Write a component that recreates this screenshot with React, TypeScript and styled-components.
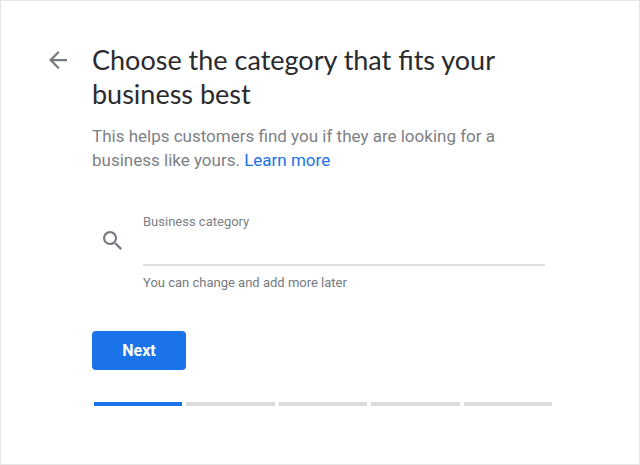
import React from "react";
import styled, { createGlobalStyle } from "styled-components";

const GlobalStyle = createGlobalStyle`
  *, *::before, *::after { box-sizing: border-box; }
  body { margin: 0; background: #fff; font-family: Roboto, "Liberation Sans", sans-serif; }
`;

const Page = styled.main`
  display: grid;
  grid-template-columns: 18px minmax(0, 1fr);
  column-gap: 25px;
  min-height: 100vh;
  padding: 42px 87px 40px 48px;
  border: 1px solid #e6e6e6;
  align-content: start;
`;

const BackButton = styled.button`
  display: flex;
  align-self: start;
  margin-top: 8px;
  padding: 0;
  border: 0;
  background: none;
  color: #757a7f;
  cursor: pointer;
`;

const Content = styled.div`
  min-width: 0;
`;

const Title = styled.h1`
  margin: 0;
  max-width: 440px;
  color: #2a2b2e;
  font-family: Lato, Roboto, sans-serif;
  font-size: 27px;
  font-weight: 400;
  line-height: 34px;
`;

const Intro = styled.p`
  margin: 13px 0 0;
  max-width: 440px;
  color: #7d8185;
  font-size: 17px;
  line-height: 24px;
`;

const TextLink = styled.a`
  color: #1a73e8;
  text-decoration: none;
`;

const Field = styled.div`
  display: grid;
  grid-template-columns: 20px minmax(0, 1fr);
  column-gap: 20px;
  margin: 42px 7px 0 11px;
`;

const FieldIcon = styled.span`
  display: flex;
  padding-top: 17px;
  color: #757a7f;
`;

const FieldBody = styled.div`
  display: flex;
  flex-direction: column;
`;

const Label = styled.label`
  color: #7d8185;
  font-size: 13px;
  line-height: 16px;
`;

const Input = styled.input`
  width: 100%;
  height: 36px;
  padding: 0;
  border: 0;
  border-bottom: 2px solid #dadce0;
  outline: 0;
  border-radius: 0;
  background: transparent;
  color: #202124;
  font: 17px Roboto, sans-serif;
`;

const Hint = styled.span`
  margin-top: 9px;
  color: #757a7f;
  font-size: 13px;
  line-height: 16px;
`;

const NextButton = styled.button`
  display: block;
  min-width: 94px;
  height: 39px;
  margin-top: 40px;
  padding: 0 24px;
  border: 0;
  border-radius: 4px;
  background: #1a73e8;
  color: #fff;
  font: 700 16px Roboto, sans-serif;
  cursor: pointer;
`;

const Steps = styled.div`
  display: grid;
  grid-template-columns: repeat(5, 1fr);
  gap: 4px;
  margin: 32px 0 0 2px;
`;

const Step = styled.span<{ $active: boolean }>`
  height: 4px;
  background: ${(p) => (p.$active ? "#1a73e8" : "#dadbdd")};
`;

export default function App() {
  return (
    <>
      <GlobalStyle />
      <Page>
        <BackButton aria-label="Back">
          <svg width="18" height="18" viewBox="4 4 16 16" fill="currentColor" aria-hidden="true">
            <path d="M20 11H7.83l5.59-5.59L12 4l-8 8 8 8 1.41-1.41L7.83 13H20v-2z" />
          </svg>
        </BackButton>
        <Content>
          <Title>Choose the category that fits your business best</Title>
          <Intro>
            This helps customers find you if they are looking for a business like yours.{" "}
            <TextLink href="#learn-more">Learn more</TextLink>
          </Intro>
          <Field>
            <FieldIcon>
              <svg width="19" height="19" viewBox="3 3 17.5 17.5" fill="currentColor" aria-hidden="true">
                <path d="M15.5 14h-.79l-.28-.27A6.47 6.47 0 0 0 16 9.5 6.5 6.5 0 1 0 9.5 16c1.61 0 3.09-.59 4.23-1.57l.27.28v.79l5 4.99L20.49 19l-4.99-5zm-6 0C7.01 14 5 11.99 5 9.5S7.01 5 9.5 5 14 7.01 14 9.5 11.99 14 9.5 14z" />
              </svg>
            </FieldIcon>
            <FieldBody>
              <Label htmlFor="category">Business category</Label>
              <Input id="category" type="text" aria-describedby="category-hint" />
              <Hint id="category-hint">You can change and add more later</Hint>
            </FieldBody>
          </Field>
          <NextButton>Next</NextButton>
          <Steps role="progressbar" aria-label="Setup progress" aria-valuemin={0} aria-valuemax={5} aria-valuenow={1}>
            {[1, 2, 3, 4, 5].map((n) => (
              <Step key={n} $active={n === 1} />
            ))}
          </Steps>
        </Content>
      </Page>
    </>
  );
}
